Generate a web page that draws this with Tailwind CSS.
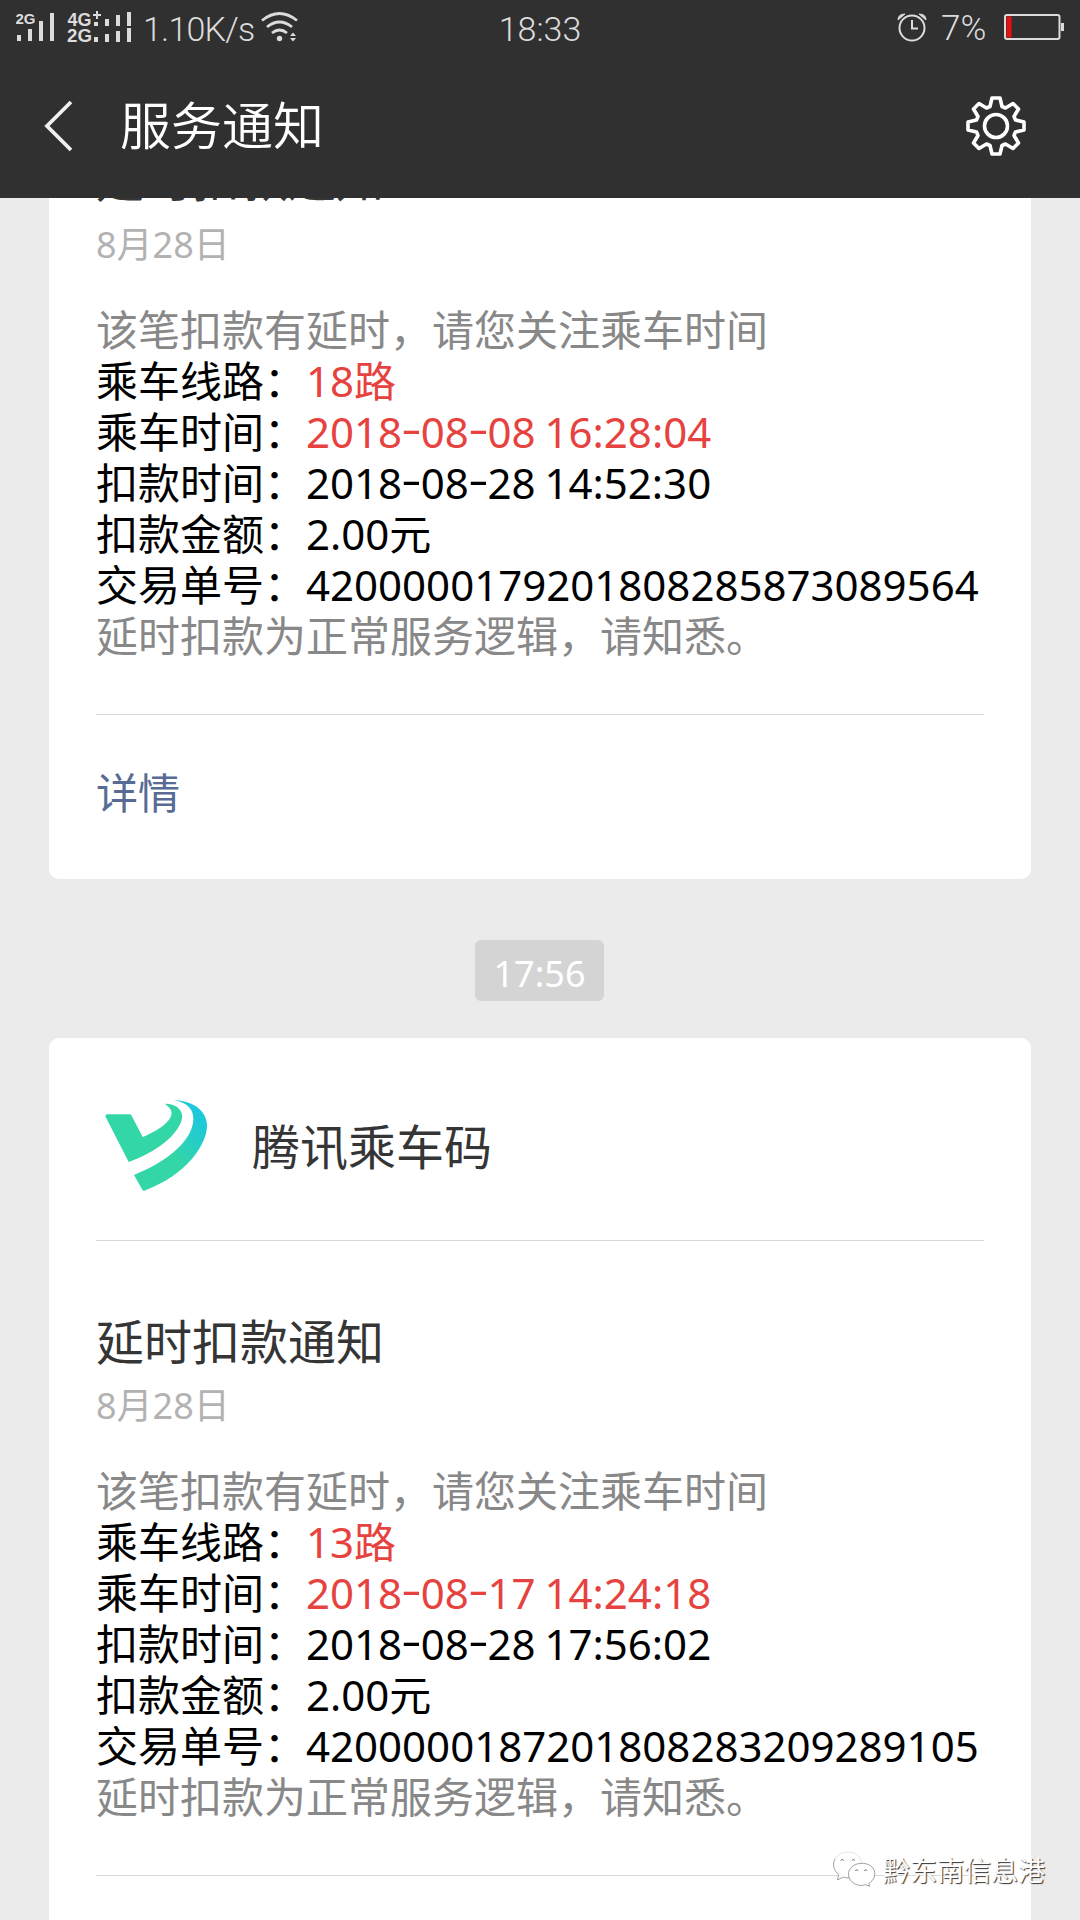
<!DOCTYPE html>
<html lang="zh-CN">

<head>
  <meta charset="UTF-8" />
  <meta name="viewport" content="width=device-width, initial-scale=1.0" />
  <script src="https://cdn.jsdelivr.net/npm/@tailwindcss/browser@4"></script>
  <title>服务通知</title>
</head>

<body class="bg-[#ebebeb] font-['Noto_Sans','Noto_Sans_CJK_SC',sans-serif]">
  <div class="relative flex flex-col w-[1080px] h-[1920px] overflow-hidden">
    <header class="relative z-10 shrink-0 h-[198px] bg-[#303030] text-white">
      <!-- status bar -->
      <div class="grid grid-cols-3 items-center h-[58px] pl-4 pr-4 font-['Roboto'] font-[350] text-[#dcdcdc]">
        <div class="flex items-center">
          <svg class="w-[120px] h-[58px]" viewBox="16 0 120 58" fill="#dcdcdc" font-family="Liberation Sans" font-weight="700">
            <text x="15.500" y="24" font-size="14" textLength="20" lengthAdjust="spacingAndGlyphs">2G</text>
            <path d="M17 35h4v6h-4zM28 29h4v12h-4zM39 21h4v20h-4zM50 13h4v28h-4z" />
            <text x="67.500" y="26" font-size="18" textLength="24" lengthAdjust="spacingAndGlyphs">4G</text>
            <text x="67" y="42" font-size="18" textLength="25" lengthAdjust="spacingAndGlyphs">2G</text>
            <path d="M96 11h2v3h3v2h-3v3h-2v-3h-3v-2h3zM94 22h4v4h-4zM105 19h4v7h-4zM116 15h4v11h-4zM127 12h4v14h-4zM94 37h4v5h-4zM105 34h4v8h-4zM116 31h4v11h-4zM127 28h4v14h-4z" />
          </svg>
          <span class="ml-[7px] w-[113px] text-[34px] leading-[56px] tracking-[-0.8px] whitespace-nowrap">1.10K/s</span>
          <svg class="ml-1 w-[38px] h-[58px]" viewBox="260 0 38 58" fill="none" stroke="#dcdcdc" stroke-width="2.800">
            <path d="M262 20.500q17.500-14 35 0M267 27q12.500-10 25 0M272 33q7.500-6 15 0" />
            <circle cx="279.500" cy="38.500" r="2.700" fill="#dcdcdc" stroke="none" />
            <path d="M290 36l3-3.500 3 3.500zM290 38l3 3.500 3-3.500z" fill="#dcdcdc" stroke="none" />
          </svg>
        </div>
        <div class="text-center text-[34px] leading-[58px]">18:33</div>
        <div class="flex items-center justify-end">
          <svg class="w-[30px] h-[58px]" viewBox="897 0 30 58" fill="none" stroke="#dcdcdc" stroke-width="2">
            <circle cx="912" cy="28" r="12.500" />
            <path d="M912 20v8.500h6" />
            <path d="M898 20q0-6 7-6zM926 20q0-6-7-6z" fill="#dcdcdc" stroke-width="1" />
          </svg>
          <span class="ml-[14px] w-[48px] text-[35px] leading-[54px]">7%</span>
          <svg class="ml-[15px] w-[60px] h-[58px]" viewBox="1004 0 60 58">
            <rect x="1005" y="15" width="54.500" height="24" rx="2" fill="none" stroke="#dcdcdc" stroke-width="2" />
            <path d="M1006.500 16.500h5v21h-5z" fill="#e81010" />
            <path d="M1061 23h3v8h-3z" fill="#dcdcdc" />
          </svg>
        </div>
      </div>
      <!-- title bar -->
      <div class="flex items-center h-[136px] pl-11 pr-[52px]">
        <svg class="w-[30px] h-[52px]" viewBox="0 0 30 52" fill="none" stroke="#f0f0f0" stroke-width="3.800">
          <path d="M27 2L3 26l24 24" />
        </svg>
        <h1 class="ml-[46px] text-[51px] leading-[58px] pb-[2px] font-[350]">服务通知</h1>
        <svg class="ml-auto w-[64px] h-[64px]" viewBox="-32 -32 64 64" fill="none" stroke="#fff" stroke-width="3.600" stroke-linejoin="round">
          <circle r="11.500" />
          <path d="M-4-28H4L6-19.500L9.500-18L17-22.500L22.500-17L18-9.500L19.500-6L28-4V4L19.500 6L18 9.500L22.500 17L17 22.500L9.500 18L6 19.500L4 28H-4L-6 19.500L-9.500 18L-17 22.500L-22.500 17L-18 9.500L-19.500 6L-28 4V-4L-19.500-6L-18-9.500L-22.500-17L-17-22.500L-9.500-18L-6-19.500Z" />
        </svg>
      </div>
    </header>

    <main class="flex flex-col items-center -mt-[321px]">
      <section class="w-[982px] h-[1002px] shrink-0 px-[47px] bg-white rounded-[10px]">
        <div class="flex items-center h-[203px] border-b border-[#d9d9d9]"></div>
        <h2 class="pt-[69px] pb-[2px] text-[48px] leading-[60px] text-[#353535]">延时扣款通知</h2>
        <p class="mt-3 text-[36px] leading-[44px] text-[#b2b2b2]">8月28日</p>
        <div class="mt-[37px] text-[42px] leading-[51px] text-black whitespace-nowrap">
          <p class="h-[51px] text-[#888]">该笔扣款有延时，请您关注乘车时间</p>
          <p class="h-[51px]">乘车线路：<span class="text-[#e64340]">18路</span></p>
          <p class="h-[51px]">乘车时间：<span class="text-[#e64340] [word-spacing:-2px]">2018<i class="inline-block not-italic w-[18.7px] text-center scale-x-150 -translate-y-1">-</i>08<i class="inline-block not-italic w-[18.7px] text-center scale-x-150 -translate-y-1">-</i>08 16:28:04</span></p>
          <p class="h-[51px] [word-spacing:-2px]">扣款时间：2018<i class="inline-block not-italic w-[18.7px] text-center scale-x-150 -translate-y-1">-</i>08<i class="inline-block not-italic w-[18.7px] text-center scale-x-150 -translate-y-1">-</i>28 14:52:30</p>
          <p class="h-[51px]">扣款金额：2.00元</p>
          <p class="h-[51px]">交易单号：4200000179201808285873089564</p>
          <p class="h-[51px] text-[#888]">延时扣款为正常服务逻辑，请知悉。</p>
        </div>
        <div class="mt-[53px] pt-12 border-t border-[#d9d9d9]">
          <a class="block text-[42px] leading-[60px] text-[#576b95]">详情</a>
        </div>
      </section>

      <div class="mt-[61px] mr-px w-[129px] h-[61px] shrink-0 rounded-md bg-[#d4d4d4] text-center text-[36px] leading-[67px] text-white">17:56</div>

      <section class="mt-[37px] w-[982px] h-[1002px] shrink-0 px-[47px] bg-white rounded-[10px]">
        <div class="flex items-center h-[203px] border-b border-[#d9d9d9]">
          <svg class="ml-2 mt-[11px] w-[104px] h-[96px]" viewBox="72 50 312 288">
            <defs>
              <linearGradient id="swoosh" x1="0.300" y1="0.700" x2="0.900" y2="0.150">
                <stop offset="0.300" stop-color="#33d6a6" />
                <stop offset="1" stop-color="#1cc8dc" />
              </linearGradient>
            </defs>
            <path d="M82 102H148Q153 102 155 106L188 170C240 148 310 105 254 70C295 70 312 95 305 119C292 165 230 215 146 245L77 110Q75 102 82 102Z" fill="#33d6a6" />
            <path d="M162 284C270 240 335 180 340 120C342 90 325 68 282 59C340 62 378 90 381 132C384 190 320 285 193 331Q189 332 187 328Z" fill="url(#swoosh)" />
          </svg>
          <span class="ml-[44px] mt-[15px] text-[48px] leading-[60px] text-[#353535]">腾讯乘车码</span>
        </div>
        <h2 class="pt-[71px] text-[48px] leading-[60px] text-[#353535]">延时扣款通知</h2>
        <p class="mt-3 text-[36px] leading-[44px] text-[#b2b2b2]">8月28日</p>
        <div class="mt-[37px] text-[42px] leading-[51px] text-black whitespace-nowrap">
          <p class="h-[51px] text-[#888]">该笔扣款有延时，请您关注乘车时间</p>
          <p class="h-[51px]">乘车线路：<span class="text-[#e64340]">13路</span></p>
          <p class="h-[51px]">乘车时间：<span class="text-[#e64340] [word-spacing:-2px]">2018<i class="inline-block not-italic w-[18.7px] text-center scale-x-150 -translate-y-1">-</i>08<i class="inline-block not-italic w-[18.7px] text-center scale-x-150 -translate-y-1">-</i>17 14:24:18</span></p>
          <p class="h-[51px] [word-spacing:-2px]">扣款时间：2018<i class="inline-block not-italic w-[18.7px] text-center scale-x-150 -translate-y-1">-</i>08<i class="inline-block not-italic w-[18.7px] text-center scale-x-150 -translate-y-1">-</i>28 17:56:02</p>
          <p class="h-[51px]">扣款金额：2.00元</p>
          <p class="h-[51px]">交易单号：4200000187201808283209289105</p>
          <p class="h-[51px] text-[#888]">延时扣款为正常服务逻辑，请知悉。</p>
        </div>
        <div class="mt-[53px] border-t border-[#d9d9d9]"></div>
      </section>
    </main>

    <!-- account watermark over the card -->
    <div class="absolute left-[832px] top-[1849px] flex items-center">
      <svg class="w-[44px] h-[42px]" viewBox="96 58 138 132" fill="#fff" stroke="#888" stroke-width="2.500">
        <path d="M145 63C105 62 80 100 117 135l-4 17 19-9Q140 147 150 146L190 98C188 80 172 64 145 63Z" stroke="none" />
        <path d="M106 85C95 103 102 124 117 135l-4 17 19-9Q140 147 150 146" fill="none" />
        <path d="M106 85C120 60 175 50 190 98" fill="none" stroke="#ddd" />
        <path d="M187 100C235 98 243 145 211 163l4 9-14-5C165 178 138 145 151 120Q163 101 187 100Z" />
        <path d="M123 91q5-7 10 0M158 91q5-7 10 0M169 123q5-6 9 0M197 123q5-6 9 0" fill="none" stroke="#444" />
      </svg>
      <span class="ml-[7px] text-[27px] leading-[44px] text-white [text-shadow:1px_1px_1px_#333]">黔东南信息港</span>
    </div>
  </div>
</body>

</html>
